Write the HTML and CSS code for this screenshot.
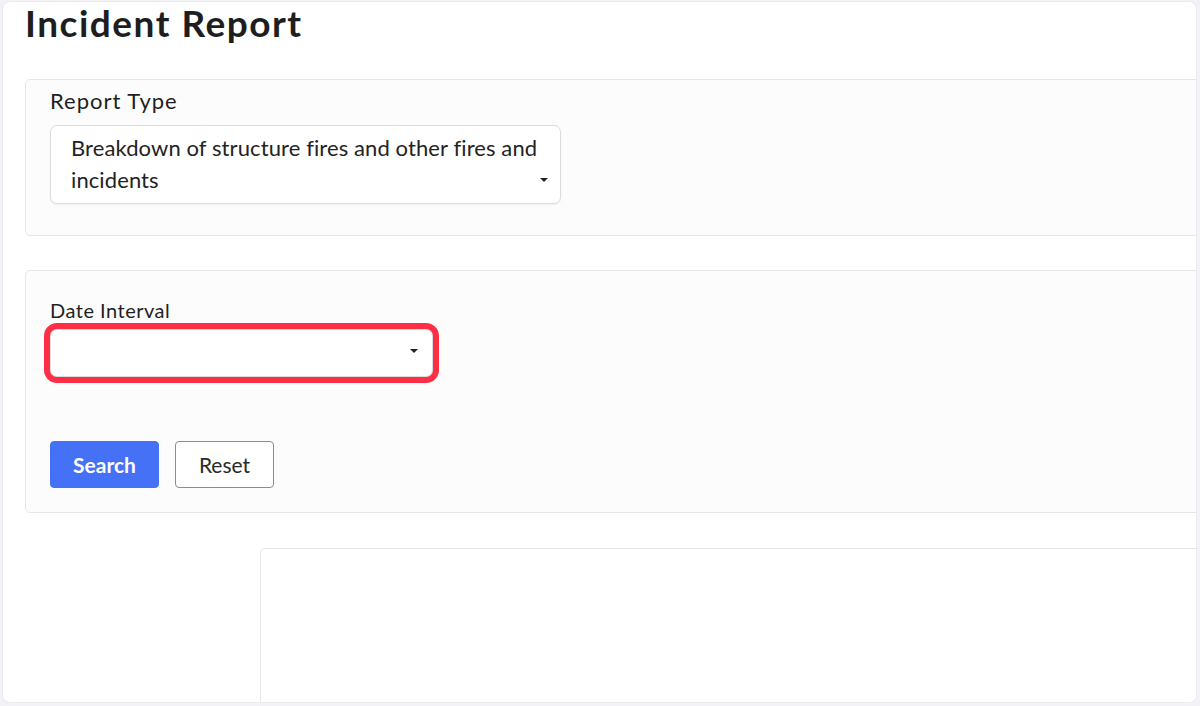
FILE: index.html
```html
<!DOCTYPE html>
<html lang="en">

<head>
    <meta charset="UTF-8">
    <meta name="viewport" content="width=device-width, initial-scale=1.0">

    <title>Incident Report</title>

    <link rel="stylesheet" href="styles.css">
</head>

<body>
    <div class="page">
        <h1 class="title">Incident Report</h1>

        <!-- Report type filter -->
        <section class="panel panel-type">
            <label class="field-label">Report Type</label>
            <div class="select select-tall">
                <span class="select-value">Breakdown of structure fires and other fires and<br>incidents</span>
                <span class="caret"></span>
            </div>
        </section>

        <!-- Date filter and actions -->
        <section class="panel panel-date">
            <label class="field-label">Date Interval</label>
            <div class="select select-date highlighted">
                <span class="select-value"></span>
                <span class="caret"></span>
            </div>
            <div class="actions">
                <button class="btn btn-primary">Search</button>
                <button class="btn btn-outline">Reset</button>
            </div>
        </section>

        <!-- Results area -->
        <section class="results"></section>
    </div>
</body>

</html>
```

FILE: styles.css
```css
/* General styles */
body {
    font-family: 'Lato', 'Noto Sans', sans-serif;
    background: #f2f2f7;
    margin: 0;
    padding: 1px 3px 3px 2px;
    height: 706px;
    box-sizing: border-box;
    overflow: hidden;
    color: #1f1f1f;
}

/* White page card */
.page {
    background: #ffffff;
    border: 1px solid #ebebf0;
    border-radius: 8px;
    height: 100%;
    box-sizing: border-box;
    padding-left: 22px;
    overflow: hidden;
}

/* Title styling */
.title {
    margin: 0;
    padding-top: 1px;
    font-size: 37px;
    line-height: 40px;
    font-weight: 700;
    color: #1e1e1e;
    letter-spacing: 1.5px;
}

/* Filter panels */
.panel {
    background: #fcfcfc;
    border: 1px solid #e6e6e6;
    border-radius: 5px;
    margin-right: -20px;
    padding-left: 24px;
}

.panel-type {
    margin-top: 36px;
    padding-top: 9px;
    padding-bottom: 31px;
}

.panel-date {
    margin-top: 34px;
    padding-top: 27px;
    padding-bottom: 24px;
}

.field-label {
    display: block;
    font-size: 20px;
    line-height: 24px;
    letter-spacing: 0.5px;
    color: #1f1f1f;
}

.panel-type .field-label {
    font-size: 22px;
    letter-spacing: 1px;
}

/* Select boxes */
.select {
    display: flex;
    justify-content: space-between;
    background: #ffffff;
    border: 1px solid #dcdcdc;
    border-radius: 7px;
    box-sizing: border-box;
    box-shadow: 0 1px 2px rgba(0, 0, 0, 0.06);
}

.select-tall {
    width: 511px;
    height: 79px;
    margin-top: 12px;
    padding: 6px 12px 0 20px;
    align-items: flex-end;
}

.select-tall .caret {
    margin-bottom: 21px;
}

.select-date {
    width: 383px;
    height: 48px;
    margin-top: 7px;
    padding: 0 14px 0 20px;
    align-items: center;
}

.select-date .caret {
    margin-top: -4px;
}

.select-value {
    font-size: 22px;
    line-height: 32px;
    letter-spacing: 0.1px;
    color: #232323;
    align-self: flex-start;
}

.caret {
    width: 0;
    height: 0;
    border-left: 4px solid transparent;
    border-right: 4px solid transparent;
    border-top: 4px solid #222222;
}

/* Red annotation ring */
.highlighted {
    outline: 6px solid #fd2e45;
    outline-offset: 0;
}

/* Buttons */
.actions {
    display: flex;
    gap: 16px;
    margin-top: 64px;
}

.btn {
    font-family: 'Lato', 'Noto Sans', sans-serif;
    font-size: 21px;
    height: 47px;
    border-radius: 4px;
    cursor: pointer;
    padding: 0;
}

.btn-primary {
    width: 109px;
    background: #4471f5;
    border: 1px solid #4471f5;
    color: #ffffff;
    font-weight: 700;
}

.btn-outline {
    width: 99px;
    background: #ffffff;
    border: 1px solid #8c8c8c;
    color: #2a2a2a;
}

/* Results area */
.results {
    margin-top: 35px;
    margin-left: 235px;
    margin-right: -20px;
    height: 200px;
    background: #ffffff;
    border: 1px solid #e6e6e6;
    border-radius: 5px;
}
```
